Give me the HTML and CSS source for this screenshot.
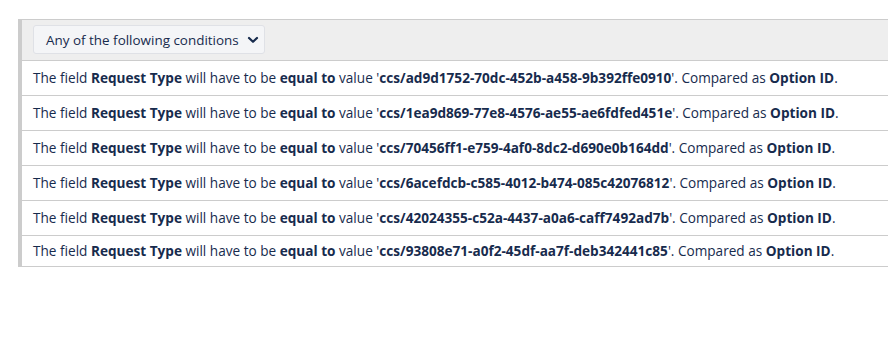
FILE: index.html
```html
<!DOCTYPE html>
<html>
<head>
<meta charset="utf-8">
<link rel="stylesheet" href="styles.css">
</head>
<body>
<div class="panel">
  <div class="panel-head">
    <div class="select">
      <span class="select-label">Any of the following conditions</span>
      <svg class="chev" width="12" height="8" viewBox="0 0 12 8"><path d="M2 2 L6 5.8 L10 2" fill="none" stroke="#172b4d" stroke-width="2.2" stroke-linecap="round" stroke-linejoin="round"/></svg>
    </div>
  </div>
  <div class="row">The field <b>Request Type</b> will have to be <b>equal to</b> value '<b>ccs/ad9d1752-70dc-452b-a458-9b392ffe0910</b>'. Compared as <b>Option ID</b>.</div>
  <div class="row">The field <b>Request Type</b> will have to be <b>equal to</b> value '<b>ccs/1ea9d869-77e8-4576-ae55-ae6fdfed451e</b>'. Compared as <b>Option ID</b>.</div>
  <div class="row">The field <b>Request Type</b> will have to be <b>equal to</b> value '<b>ccs/70456ff1-e759-4af0-8dc2-d690e0b164dd</b>'. Compared as <b>Option ID</b>.</div>
  <div class="row">The field <b>Request Type</b> will have to be <b>equal to</b> value '<b>ccs/6acefdcb-c585-4012-b474-085c42076812</b>'. Compared as <b>Option ID</b>.</div>
  <div class="row">The field <b>Request Type</b> will have to be <b>equal to</b> value '<b>ccs/42024355-c52a-4437-a0a6-caff7492ad7b</b>'. Compared as <b>Option ID</b>.</div>
  <div class="row last">The field <b>Request Type</b> will have to be <b>equal to</b> value '<b>ccs/93808e71-a0f2-45df-aa7f-deb342441c85</b>'. Compared as <b>Option ID</b>.</div>
</div>
</body>
</html>
```
FILE: styles.css
```css
html, body {
  margin: 0;
  padding: 0;
  background: #ffffff;
  overflow: hidden;
}
body {
  font-family: "Open Sans", "Noto Sans", sans-serif;
  font-size: 13.6px;
  color: #172b4d;
}
.panel {
  margin: 19px -20px 0 18px;
  border-top: 1px solid #cccccc;
  border-left: 4px solid #cccccc;
  border-bottom: 1px solid #cccccc;
}
.panel-head {
  background: #eeeeee;
  padding: 5px 11px;
  height: 30px;
  border-bottom: 1px solid #cccccc;
}
.select {
  display: inline-flex;
  align-items: center;
  box-sizing: border-box;
  width: 232px;
  height: 29px;
  padding: 1px 0 0 12px;
  background: #f4f5f7;
  border: 1px solid #dfe1e6;
  border-radius: 3px;
}
.select-label {
  flex: 1;
  font-size: 13.45px;
}
.chev {
  margin-right: 5px;
}
.row {
  box-sizing: border-box;
  height: 35px;
  display: flex;
  align-items: center;
  padding: 0 0 2px 11px;
  border-bottom: 1px solid #cccccc;
  white-space: pre;
}
.row b {
  font-weight: 700;
}
.row.last {
  height: 30px;
  border-bottom: none;
}
```
